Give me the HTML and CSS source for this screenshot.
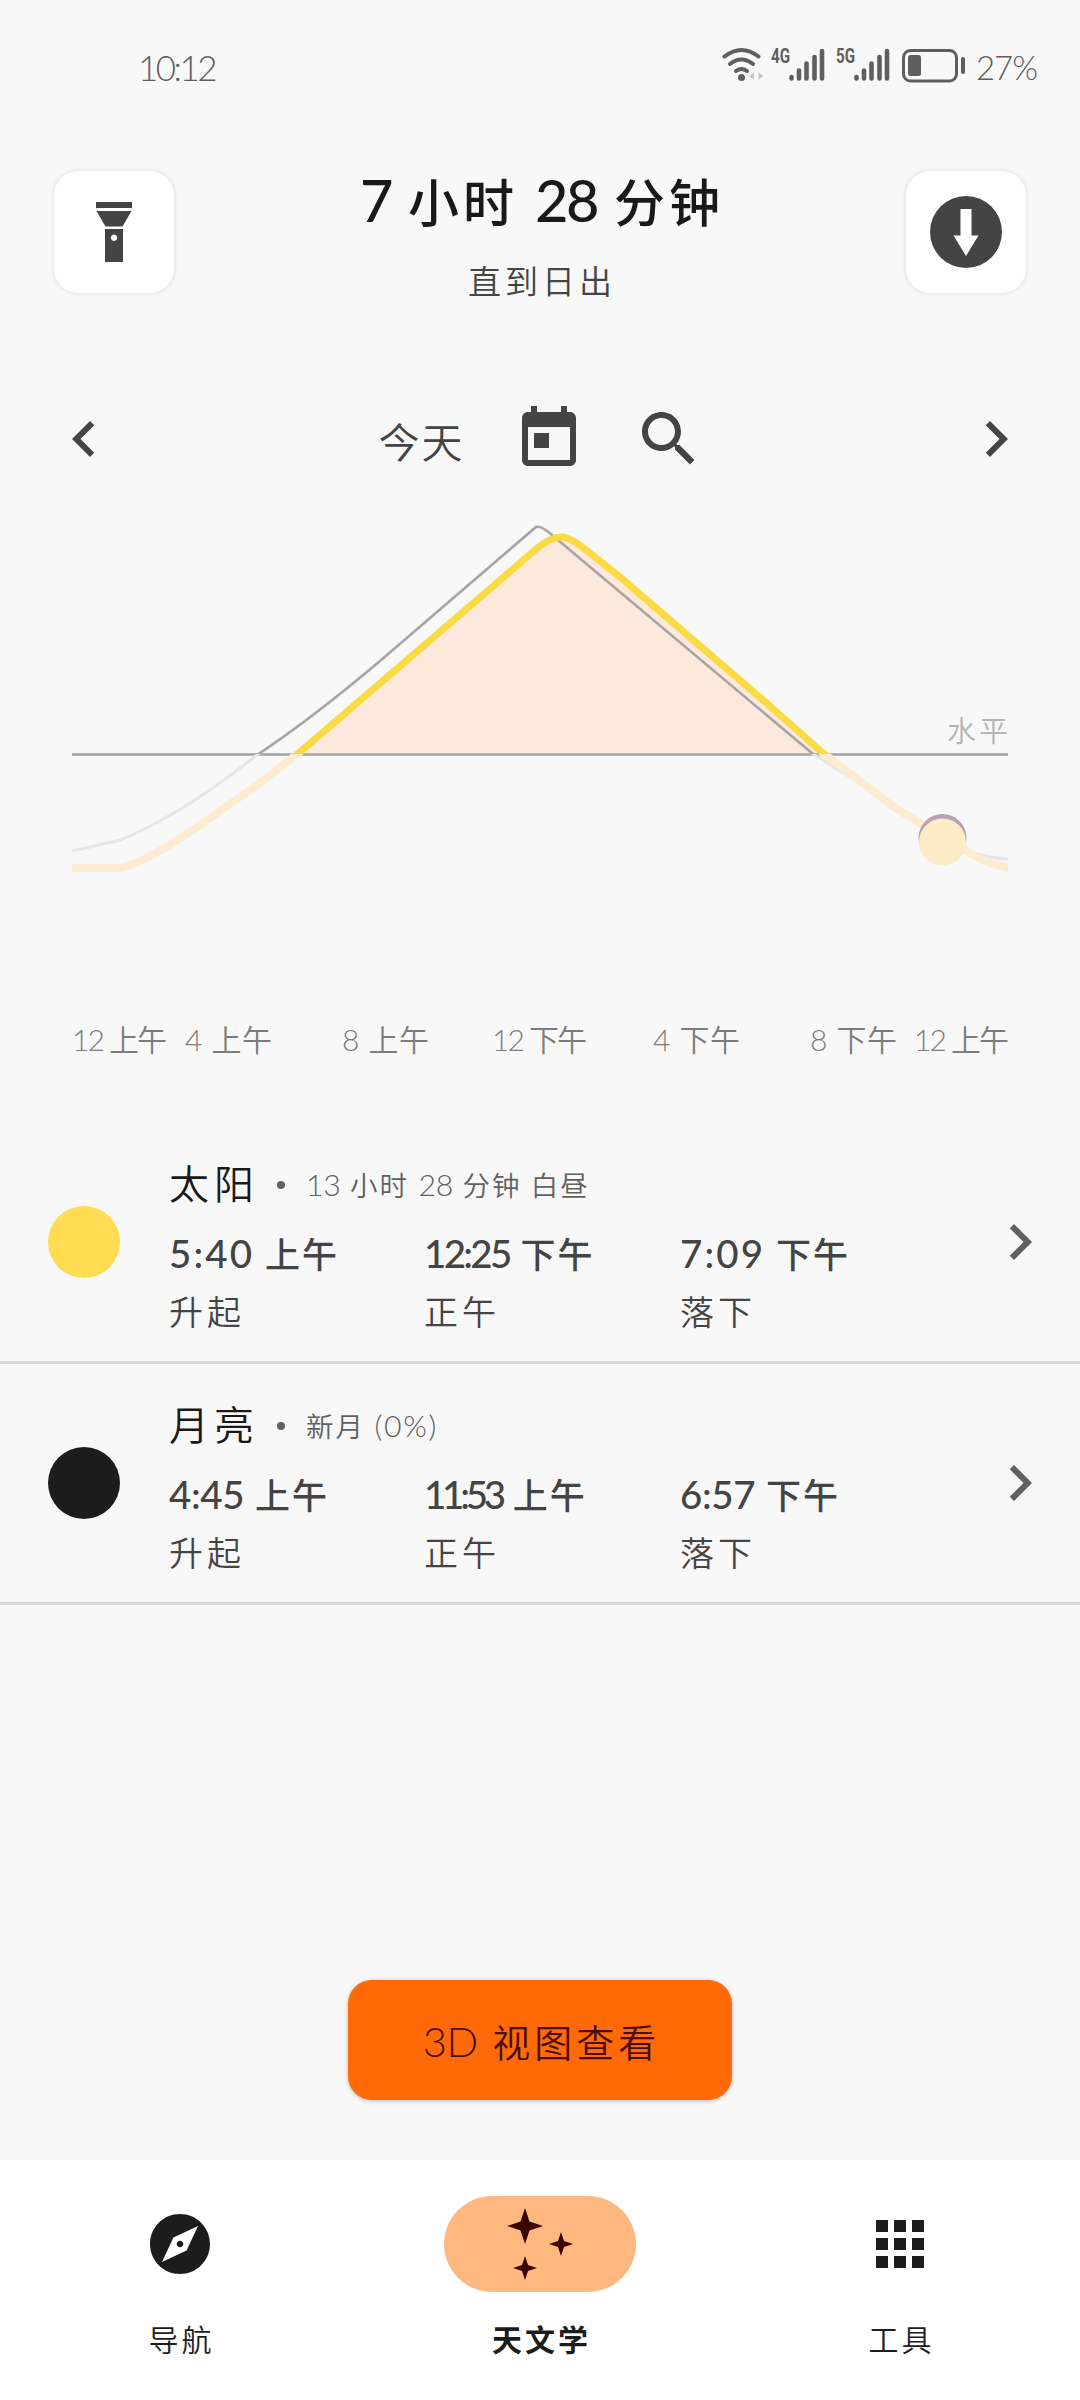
FILE: index.html
```html
<!DOCTYPE html>
<html lang="zh-CN">
<head>
<meta charset="utf-8">
<title>天文学</title>
<link rel="stylesheet" href="styles.css">
</head>
<body>
<div class="screen">
  <div class="status">
    <span class="clock">10:12</span>
    <div class="status-right">
      <svg class="status-icons" width="246" height="40" viewBox="720 44 246 40">
        <g fill="none" stroke="#5e5e5e" stroke-width="4" stroke-linecap="round">
          <path d="M724.500 56.500Q741.500 43.500 758.500 56.500"/>
          <path d="M730 64Q741.500 55 753 64"/>
          <path d="M736 71Q741.500 67 747 71"/>
        </g>
        <circle cx="741.500" cy="77.500" r="3.500" fill="#5e5e5e"/>
        <path d="M754 72.500v7l-5-3.500zM758.500 72.500v7l5-3.500z" fill="#c4c4c4"/>
        <text class="net" x="771" y="63" textLength="19" lengthAdjust="spacingAndGlyphs">4G</text>
        <text class="net" x="836" y="63" textLength="19" lengthAdjust="spacingAndGlyphs">5G</text>
        <g stroke="#5e5e5e" stroke-width="4.600" stroke-linecap="round">
          <path d="M791.500 77v1.500M799 70.500v8M806.500 63.500v15M814.500 57v21.500M822 51v27.500"/>
          <path d="M856.500 77v1.500M864 70.500v8M871.500 63.500v15M879.500 57v21.500M887 51v27.500"/>
        </g>
        <rect x="903.500" y="50.500" width="53" height="30.500" rx="7" fill="none" stroke="#5e5e5e" stroke-width="3"/>
        <rect x="908" y="55" width="13" height="21" rx="2.500" fill="#5e5e5e"/>
        <rect x="961" y="57" width="4" height="17" rx="2" fill="#5e5e5e"/>
      </svg>
      <span class="battery">27%</span>
    </div>
  </div>

  <header class="header">
    <button class="tile" aria-label="手电筒">
      <svg width="120" height="122" viewBox="54 171 120 122" fill="#444">
        <path d="M96 202h36v6h-36zM96.500 211h35l-9 15.500h-17z"/>
        <path fill-rule="evenodd" d="M105 229h18v33h-18zM114 234.500a3.200 3.200 0 1 0 .01 0z"/>
      </svg>
    </button>
    <div class="heading">
      <h1><span class="n">7</span> 小时 <span class="n">28</span> 分钟</h1>
      <p>直到日出</p>
    </div>
    <button class="tile" aria-label="下方">
      <svg width="120" height="122" viewBox="906 171 120 122">
        <circle cx="966" cy="232" r="36" fill="#444"/>
        <path d="M960.500 209h11v26.500h7L966 256l-12.500-20.500h7z" fill="#fff"/>
      </svg>
    </button>
  </header>

  <div class="dates">
    <svg class="icon" viewBox="0 0 24 24"><path d="M15.410 7.410 14 6l-6 6 6 6 1.410-1.410L10.830 12z"/></svg>
    <div class="picker">
      <span class="today">今天</span>
      <svg class="icon" viewBox="0 0 24 24"><path d="M19 3h-1V1h-2v2H8V1H6v2H5c-1.110 0-1.990.9-1.990 2L3 19c0 1.100.89 2 2 2h14c1.100 0 2-.9 2-2V5c0-1.100-.9-2-2-2zm0 16H5V8h14v11zM7 10h5v5H7z"/></svg>
      <svg class="icon" viewBox="0 0 24 24"><path d="M15.500 14h-.79l-.28-.27C15.410 12.590 16 11.110 16 9.500 16 5.910 13.090 3 9.500 3S3 5.910 3 9.500 5.910 16 9.500 16c1.610 0 3.090-.59 4.230-1.570l.27.28v.79l5 4.990L20.490 19l-4.990-5zm-6 0C7.010 14 5 11.990 5 9.500S7.010 5 9.500 5 14 7.010 14 9.500 11.990 14 9.500 14z"/></svg>
    </div>
    <svg class="icon" viewBox="0 0 24 24"><path d="M10 6 8.590 7.410 13.170 12l-4.580 4.590L10 18l6-6z"/></svg>
  </div>

  <svg class="chart" width="1080" height="600" viewBox="0 475 1080 600">
    <defs>
      <clipPath id="day"><rect x="72" y="475" width="936" height="279"/></clipPath>
      <clipPath id="night"><rect x="72" y="754" width="936" height="200"/></clipPath>
      <path id="sun-path" d="M72 868H118C145 866 205 822 257 785L300 752L527 557Q547 538 560 537Q567 536 581 546L620 577L763 700L823 753L895 808L968 852Q990 866 1012 868"/>
      <path id="moon-path" d="M72 851L120 840Q180 816 257 755Q310 720 380 661L536 527Q541 525 552 535L813 754L850 777L895 808L955 846Q985 859 1010 859"/>
    </defs>
    <path d="M300 753L527 557Q547 538 560 537Q567 536 581 546L620 577L763 700L823 753z" fill="#fce9dc"/>
    <path d="M72 754.500H1008" stroke="#a3a3a3" stroke-width="2.500"/>
    <g clip-path="url(#night)" fill="none">
      <use href="#moon-path" stroke="#e6e6e6" stroke-width="3"/>
      <use href="#sun-path" stroke="#fdecd2" stroke-width="8"/>
    </g>
    <g clip-path="url(#day)" fill="none">
      <use href="#moon-path" stroke="#a9a4a4" stroke-width="2.600"/>
      <use href="#sun-path" stroke="#fbdb43" stroke-width="7"/>
    </g>
    <circle cx="942.500" cy="838" r="24" fill="#b9a3b3"/>
    <circle cx="942.500" cy="842" r="23.500" fill="#fcebc6"/>
    <text class="horizon" x="947" y="742" textLength="61">水平</text>
    <g class="axis">
      <text x="72" y="1051" textLength="95">12 上午</text>
      <text x="185" y="1051" textLength="87">4 上午</text>
      <text x="342" y="1051" textLength="87">8 上午</text>
      <text x="492" y="1051" textLength="95">12 下午</text>
      <text x="653" y="1051" textLength="87">4 下午</text>
      <text x="810" y="1051" textLength="87">8 下午</text>
      <text x="914" y="1051" textLength="95">12 上午</text>
    </g>
  </svg>

  <main class="list">
    <section class="row">
      <i class="disc sun"></i>
      <div class="body">
        <div class="name">太阳<i class="dot"></i><small><span class="n">13</span> 小时 <span class="n">28</span> 分钟 白昼</small></div>
        <div class="times"><span><span class="n wide">5:40</span> 上午</span><span><span class="n snug">12:25</span> 下午</span><span><span class="n wide">7:09</span> 下午</span></div>
        <div class="labels"><span>升起</span><span>正午</span><span>落下</span></div>
      </div>
      <svg class="icon more" viewBox="0 0 24 24"><path d="M10 6 8.590 7.410 13.170 12l-4.580 4.590L10 18l6-6z"/></svg>
    </section>
    <section class="row">
      <i class="disc moon"></i>
      <div class="body">
        <div class="name">月亮<i class="dot"></i><small>新月 <span class="n wide">(0%)</span></small></div>
        <div class="times"><span><span class="n">4:45</span> 上午</span><span><span class="n tight">11:53</span> 上午</span><span><span class="n">6:57</span> 下午</span></div>
        <div class="labels"><span>升起</span><span>正午</span><span>落下</span></div>
      </div>
      <svg class="icon more" viewBox="0 0 24 24"><path d="M10 6 8.590 7.410 13.170 12l-4.580 4.590L10 18l6-6z"/></svg>
    </section>
  </main>

  <button class="view3d"><span class="n">3D</span> 视图查看</button>

  <nav class="nav">
    <a class="tab">
      <span class="pill"><svg class="icon" viewBox="0 0 24 24"><path d="M12 10.900c-.61 0-1.100.49-1.100 1.100s.49 1.100 1.100 1.100c.61 0 1.100-.49 1.100-1.100s-.49-1.100-1.100-1.100zM12 2C6.480 2 2 6.480 2 12s4.480 10 10 10 10-4.480 10-10S17.520 2 12 2zm2.190 12.190L6 18l3.810-8.190L18 6l-3.810 8.190z"/></svg></span>
      <span class="tab-label">导航</span>
    </a>
    <a class="tab active">
      <span class="pill"><svg class="icon" viewBox="504 2208 72 72"><path d="M525 2208l4.500 13.500L543 2226l-13.500 4.500L525 2244l-4.500-13.500L507 2226l13.500-4.500zM561 2232l3 9 9 3-9 3-3 9-3-9-9-3 9-3zM525 2256l3 9 9 3-9 3-3 9-3-9-9-3 9-3z"/></svg></span>
      <span class="tab-label">天文学</span>
    </a>
    <a class="tab">
      <span class="pill"><svg class="icon" viewBox="0 0 24 24"><path d="M4 8h4V4H4v4zm6 12h4v-4h-4v4zm-6 0h4v-4H4v4zm0-6h4v-4H4v4zm6 0h4v-4h-4v4zm6-10v4h4V4h-4zm-6 4h4V4h-4v4zm6 6h4v-4h-4v4zm0 6h4v-4h-4v4z"/></svg></span>
      <span class="tab-label">工具</span>
    </a>
  </nav>
</div>
</body>
</html>
```
FILE: styles.css
```css
* { box-sizing: border-box; }
body { margin: 0; background: #f8f8f8; }
button { border: 0; padding: 0; font: inherit; }
h1, p { margin: 0; font-weight: inherit; }

.screen {
  width: 1080px;
  height: 2400px;
  display: flex;
  flex-direction: column;
  overflow: hidden;
  background: #f8f8f8;
  color: #444;
  font-family: Lato, "Noto Sans CJK SC", sans-serif;
  font-weight: 350;
  white-space: nowrap;
}
.n { font-size: 1.1em; line-height: 1; letter-spacing: -0.01em; }
.n.wide { letter-spacing: 0.055em; }
.n.snug { letter-spacing: -0.07em; }
.n.tight { letter-spacing: -0.11em; }
.icon { width: 72px; height: 72px; flex: none; fill: #444; }

.status {
  height: 171px;
  padding: 44px 43px 0 138px;
  display: flex;
  justify-content: space-between;
  color: #5e5e5e;
  line-height: 46px;
}
.clock { font-size: 35px; letter-spacing: -2.5px; }
.status-right { display: flex; }
.status-icons { margin-right: 10px; }
.battery { font-size: 33px; letter-spacing: -1px; }
.net { font: 700 20px Roboto, sans-serif; letter-spacing: 0; fill: #5e5e5e; }

.header {
  height: 232px;
  padding: 0 54px;
  display: flex;
  justify-content: space-between;
}
.tile {
  width: 120px;
  height: 122px;
  border-radius: 24px;
  background: #fff;
  box-shadow: 0 0 4px rgba(0, 0, 0, 0.14);
}
.tile svg { display: block; }
.heading { text-align: center; padding-left: 4px; }
.heading h1 {
  font-size: 51px;
  font-weight: 500;
  line-height: 64px;
  letter-spacing: 4px;
  color: #191919;
}
.heading h1 .n { font-size: 1.13em; letter-spacing: -0.04em; }
.heading p {
  margin-top: 26px;
  font-size: 33px;
  line-height: 40px;
  letter-spacing: 4px;
}

.dates {
  height: 72px;
  padding: 0 48px;
  display: flex;
  justify-content: space-between;
  align-items: center;
}
.picker { display: flex; gap: 48px; align-items: center; padding-left: 3px; }
.today { font-size: 41px; letter-spacing: 2px; padding-top: 2px; }

.chart { display: block; flex: none; }
.horizon { font-size: 29px; fill: #b4b4b4; }
.axis { font-size: 30px; fill: #7c7c7c; }

.list { padding-top: 48px; flex: 1; }
.row {
  height: 241px;
  padding: 0 24px 0 48px;
  display: flex;
  align-items: center;
  border-bottom: 3px solid #d8d8d8;
}
.disc { width: 72px; height: 72px; border-radius: 50%; flex: none; }
.sun { background: #ffdc52; }
.moon { background: #1c1c1c; }
.body { flex: 1; padding-left: 49px; margin-top: 3px; }
.name {
  display: flex;
  align-items: center;
  font-size: 40px;
  line-height: 56px;
  letter-spacing: 5px;
  color: #191919;
}
.name small {
  font-size: 27.5px;
  letter-spacing: 2px;
  color: #606060;
  padding-top: 5px;
}
.dot { width: 8px; height: 8px; margin: 3px 21px 0 18px; border-radius: 50%; background: #606060; }
.times, .labels { display: grid; grid-template-columns: 255px 256px 1fr; line-height: 44px; }
.times { margin-top: 18px; font-size: 35px; font-weight: 500; letter-spacing: 2px; }
.labels { margin-top: 14px; font-size: 34px; letter-spacing: 4px; }
.more { fill: #606060; }

.view3d {
  width: 384px;
  height: 120px;
  margin: 0 auto 60px;
  padding-left: 3px;
  border-radius: 24px;
  background: #ff6908;
  box-shadow: 0 1px 4px rgba(0, 0, 0, 0.25);
  font-size: 38px;
  letter-spacing: 4px;
  color: #4a0e00;
  flex: none;
}

.nav {
  height: 240px;
  padding-top: 36px;
  display: grid;
  grid-template-columns: repeat(3, 1fr);
  background: #fff;
  color: #1c1c1c;
  flex: none;
}
.nav .icon { fill: #1c1c1c; }
.tab { display: flex; flex-direction: column; align-items: center; }
.pill { width: 192px; height: 96px; border-radius: 48px; display: grid; place-items: center; }
.active .pill { background: #ffb87f; }
.nav .active .icon { fill: #380500; }
.tab-label { margin-top: 26px; padding-left: 3px; font-size: 30px; line-height: 42px; letter-spacing: 3px; }
.active .tab-label { font-weight: 700; }
```
